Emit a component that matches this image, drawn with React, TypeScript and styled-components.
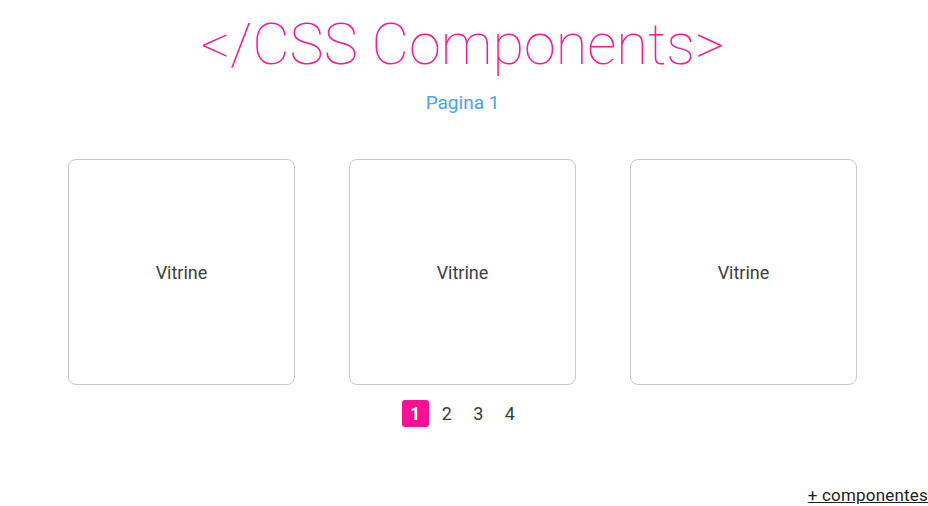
import React from "react";
import styled, { createGlobalStyle } from "styled-components";

const Global = createGlobalStyle`
  html, body { margin: 0; padding: 0; background: #fff; }
  body { font-family: Roboto, "Noto Sans", Arial, sans-serif; }
`;

const Page = styled.div`
  height: 506px;
  display: flex;
  flex-direction: column;
  align-items: center;
  box-sizing: border-box;
  padding-right: 3px;
`;

const Title = styled.h1`
  margin: 10px 0 0;
  font-size: 57.7px;
  font-weight: 100;
  line-height: 68px;
  color: #ff1a8f;
  letter-spacing: 0;
`;

const Subtitle = styled.div`
  margin-top: 13px;
  font-size: 19px;
  color: #42a5f5;
  line-height: 24px;
`;

const Grid = styled.div`
  margin-top: 44px;
  display: grid;
  grid-template-columns: repeat(3, 227px);
  column-gap: 54px;
`;

const Card = styled.div`
  height: 226px;
  box-sizing: border-box;
  border: 1px solid #c9c9c9;
  border-radius: 8px;
  display: flex;
  align-items: center;
  justify-content: center;
  font-size: 18px;
  color: #3e3e3e;
`;

const Pager = styled.div`
  margin-top: 15px;
  display: flex;
  gap: 4.6px;
`;

const PageBtn = styled.div<{ $active?: boolean }>`
  width: 27px;
  height: 27px;
  border-radius: 3px;
  display: flex;
  align-items: center;
  justify-content: center;
  font-size: 18px;
  font-weight: ${(p) => (p.$active ? 700 : 400)};
  color: ${(p) => (p.$active ? "#fff" : "#3a3a3a")};
  background: ${(p) => (p.$active ? "#ff0f93" : "transparent")};
`;

const Footer = styled.a`
  margin-top: auto;
  align-self: flex-end;
  margin-right: -3px;
  margin-bottom: 1px;
  font-size: 17px;
  letter-spacing: 0.2px;
  color: #222;
  text-decoration: underline;
  line-height: 20px;
`;

export default function App() {
  return (
    <>
      <Global />
      <Page>
        <Title>&lt;/CSS Components&gt;</Title>
        <Subtitle>Pagina 1</Subtitle>
        <Grid>
          <Card>Vitrine</Card>
          <Card>Vitrine</Card>
          <Card>Vitrine</Card>
        </Grid>
        <Pager>
          <PageBtn $active>1</PageBtn>
          <PageBtn>2</PageBtn>
          <PageBtn>3</PageBtn>
          <PageBtn>4</PageBtn>
        </Pager>
        <Footer>+ componentes</Footer>
      </Page>
    </>
  );
}
